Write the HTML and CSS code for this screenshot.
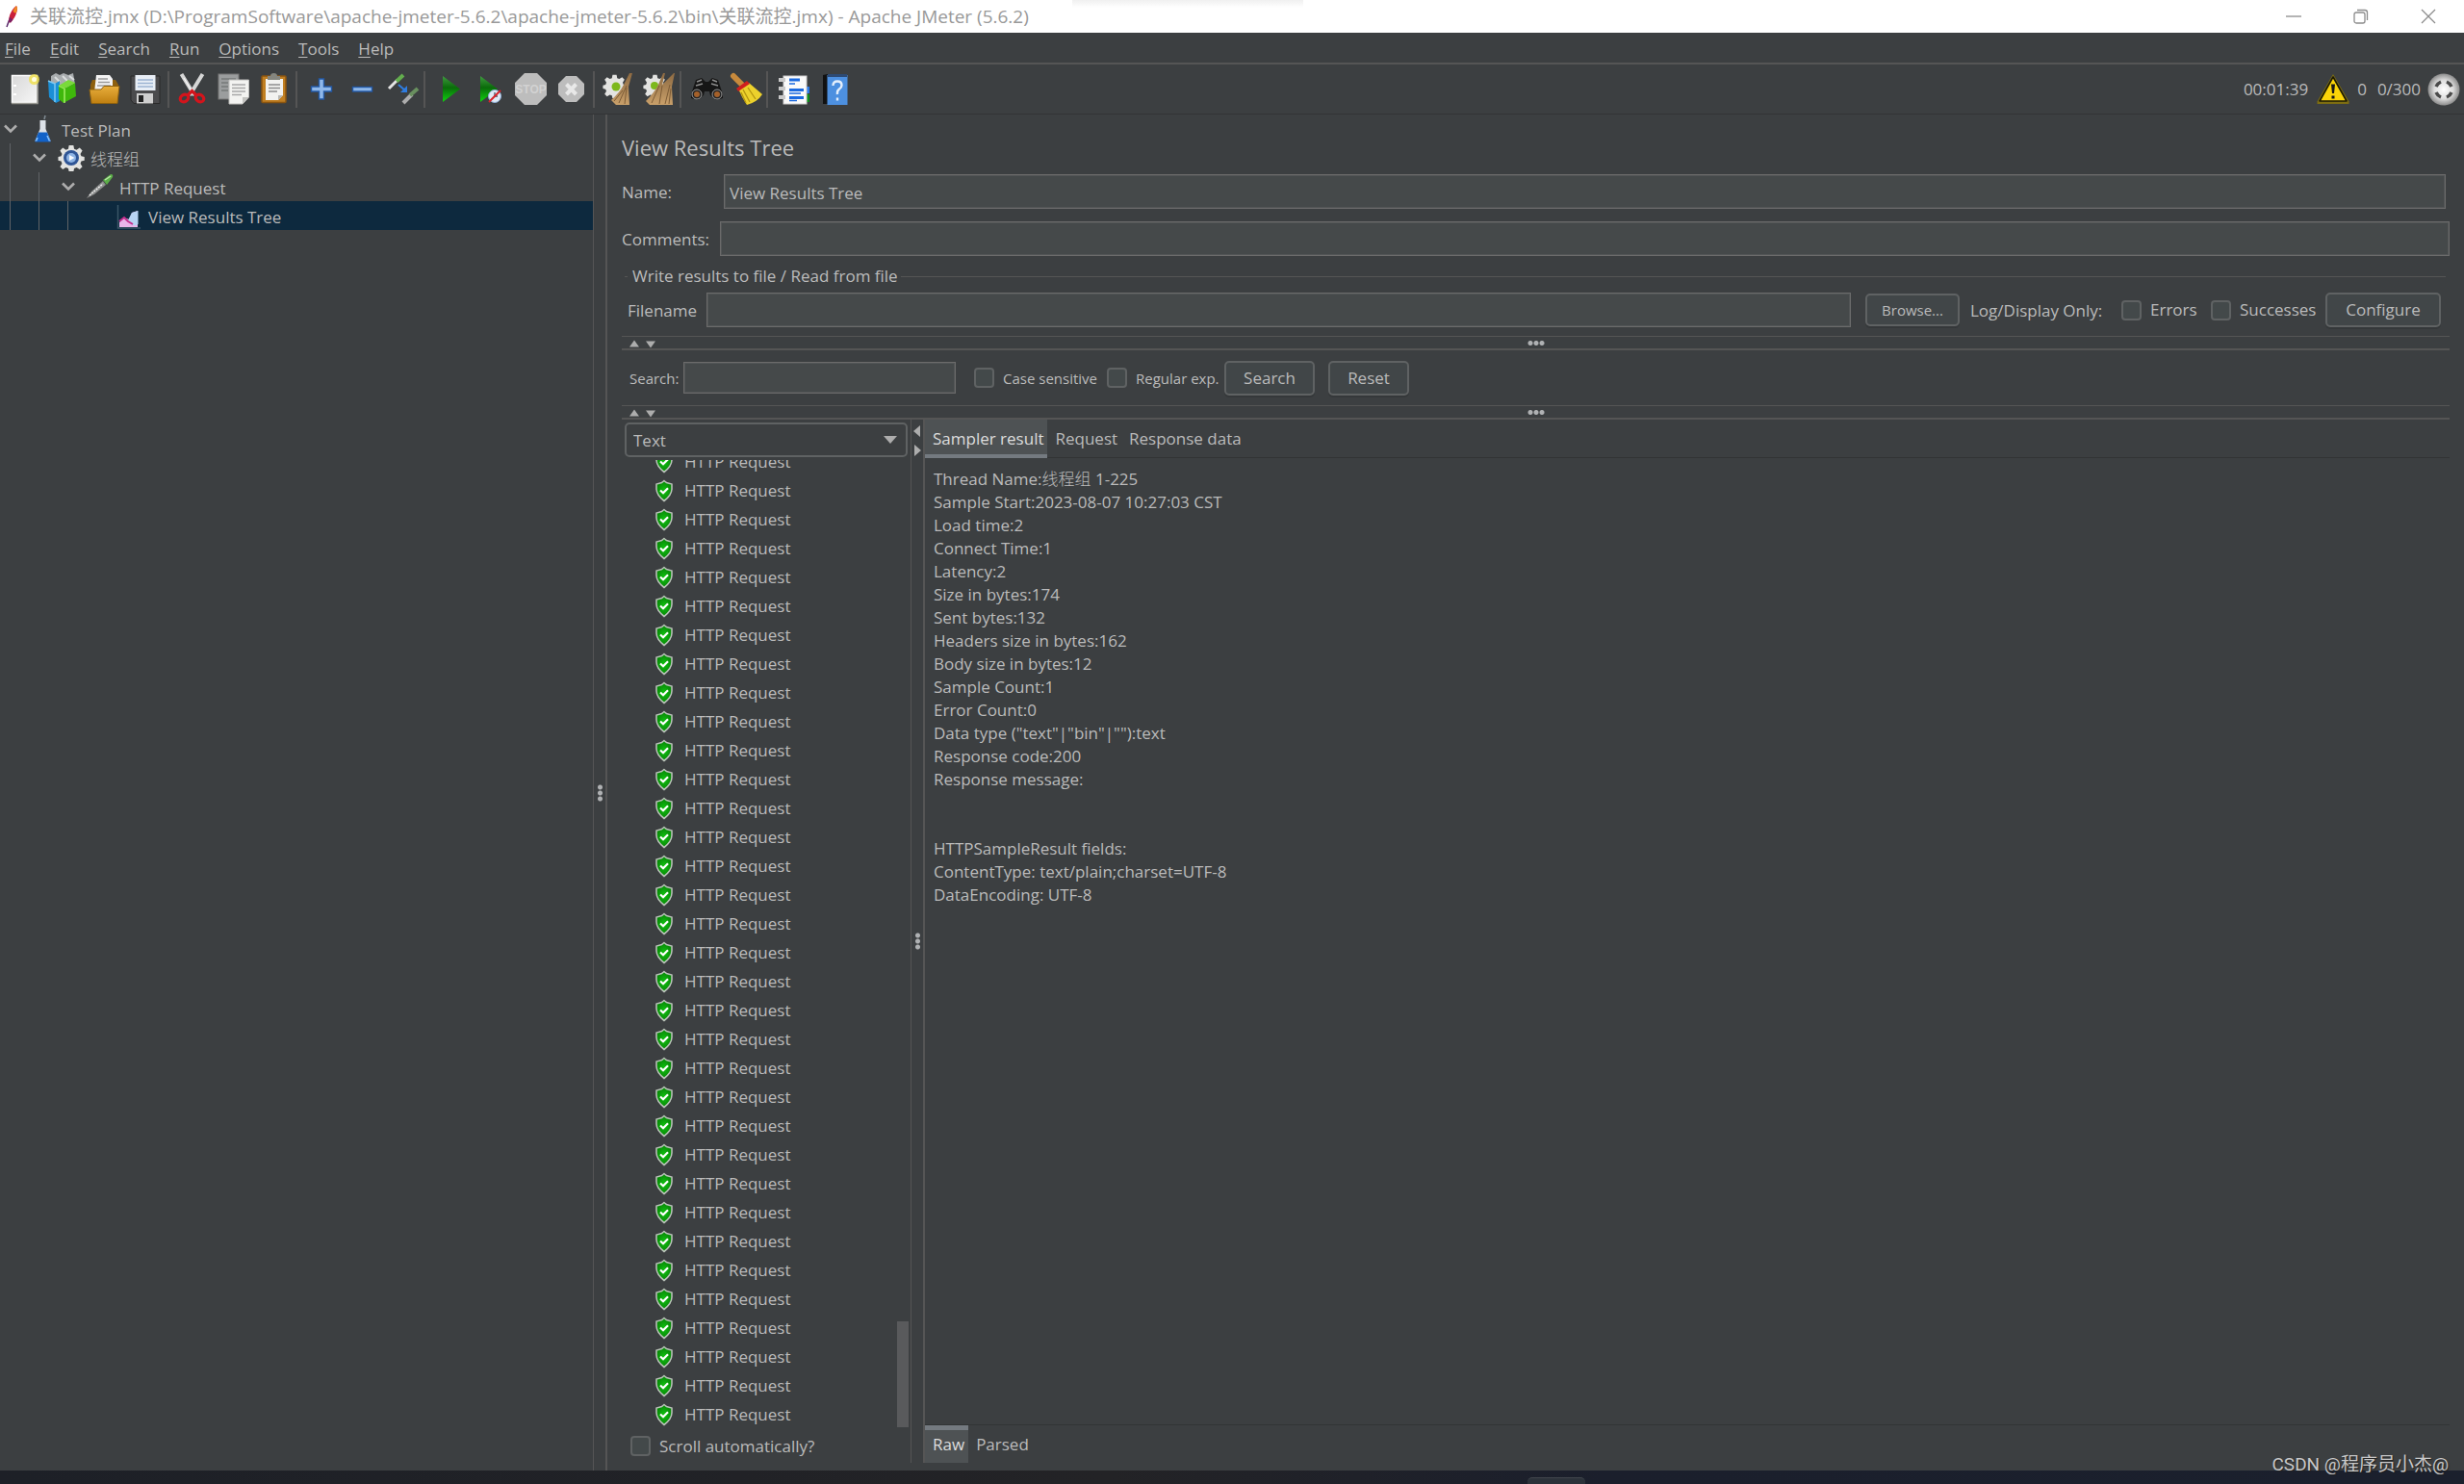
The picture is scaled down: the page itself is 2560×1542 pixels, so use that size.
FILE: index.html
```html
<!DOCTYPE html>
<html lang="en">
<head>
<meta charset="utf-8">
<title>Apache JMeter (5.6.2)</title>
<link rel="stylesheet" href="styles.css">
</head>
<body>
<svg class="defs" aria-hidden="true">
  <defs>
    <linearGradient id="gGreen" x1="0" y1="0" x2="0" y2="1"><stop offset="0" stop-color="#3f9a3f"/><stop offset=".45" stop-color="#0a6b0a"/><stop offset="1" stop-color="#0fd40f"/></linearGradient>
    <linearGradient id="gFolder" x1="0" y1="0" x2="0" y2="1"><stop offset="0" stop-color="#e8ae3c"/><stop offset="1" stop-color="#bf7f10"/></linearGradient>
    <linearGradient id="gPaper" x1="0" y1="0" x2="1" y2="1"><stop offset="0" stop-color="#d8d8d8"/><stop offset="1" stop-color="#f6f6f6"/></linearGradient>
    <linearGradient id="gBroom" x1="0" y1="0" x2="0" y2="1"><stop offset="0" stop-color="#8d6a42"/><stop offset="1" stop-color="#c9a06a"/></linearGradient>
    <radialGradient id="gBall"><stop offset="0" stop-color="#fff"/><stop offset=".6" stop-color="#dcdcdc"/><stop offset="1" stop-color="#8c8c8c"/></radialGradient>
    <radialGradient id="gShield"><stop offset="0" stop-color="#10c410"/><stop offset="1" stop-color="#078407"/></radialGradient>
  </defs>
  <symbol id="shield" viewBox="0 0 20 24">
    <path d="M10 .5 13 2.500 19 4.500V10C19 16 15 20 10 23.500 5 20 1 16 1 10V4.500L7 2.500Z" fill="#2b2d2e"/>
    <path d="M10 1.500 12.500 3.500 18 5V10C18 15.500 14.500 19 10 22.500 5.500 19 2 15.500 2 10V5L7.500 3.500Z" fill="url(#gShield)" stroke="#b9c2b9" stroke-width="1.600"/>
    <path d="M6 11.500 9 14.200 14 9.200" fill="none" stroke="#fff" stroke-width="2.200"/>
  </symbol>
  <symbol id="chevron" viewBox="0 0 16 10"><path d="M2 1.500 8 7.500 14 1.500" fill="none" stroke="#adadad" stroke-width="2.600"/></symbol>
  <symbol id="cog" viewBox="0 0 30 30">
    <path d="M12.500 1h5l.8 4 2.600 1.100 3.500-2.300 3 3.200-2.200 3.600 1 2.600 3.500.8v4l-3.500.8-1 2.600 2.200 3.500-3 3-3.500-2.200-2.600 1.100-.8 3.700h-5l-.8-3.700-2.600-1.100-3.500 2.200-3-3 2.200-3.500-1-2.600L.5 18v-4l3.300-.8 1-2.600L2.600 7l3-3.200 3.500 2.300L11.700 5Z" fill="#e3e3e1"/>
  </symbol>
</svg>

<header class="titlebar">
  <svg class="feather" viewBox="0 0 14 24"><path d="M1 23 3.500 16" stroke="#5b2a6b" stroke-width="1.500"/><path d="M3 18C3 11 6 5 11 1l1 2C12 9 9 14 5 18.500Z" fill="#c9203a"/><path d="M7.500 7Q9 3 11 1l1 2Q12 6 10.500 9Z" fill="#f08a24"/><path d="M3 18Q3 15 4 12.500L7.500 15.500 5 18.500Z" fill="#7d2064"/></svg>
  <span class="window-title">关联流控.jmx (D:\ProgramSoftware\apache-jmeter-5.6.2\apache-jmeter-5.6.2\bin\关联流控.jmx) - Apache JMeter (5.6.2)</span>
  <div class="window-controls">
    <button aria-label="Minimize"><svg viewBox="0 0 16 16"><path d="M0 8H16"/></svg></button>
    <button aria-label="Restore"><svg viewBox="0 0 16 16"><rect x="1" y="4" width="11" height="11" rx="2"/><path d="M4 1.500H12Q14.500 1.500 14.500 4V12"/></svg></button>
    <button aria-label="Close"><svg viewBox="0 0 16 16"><path d="M1 1 15 15M15 1 1 15"/></svg></button>
  </div>
</header>

<nav class="menubar">
  <button><u>F</u>ile</button><button><u>E</u>dit</button><button><u>S</u>earch</button><button><u>R</u>un</button><button><u>O</u>ptions</button><button><u>T</u>ools</button><button><u>H</u>elp</button>
</nav>

<div class="toolbar">
  <button aria-label="New"><svg viewBox="0 0 43 50"><rect x="10.500" y="10.500" width="26" height="28" fill="url(#gPaper)" stroke="#fff" stroke-width="1.500"/><path d="M10 39.500H37V14" fill="none" stroke="#9a9a94" stroke-width="1.500"/><path d="M13.500 20v2M13.500 29v2" stroke="#fff" stroke-width="3"/><circle cx="33.500" cy="14.500" r="5.500" fill="#f0e04a" opacity=".8"/><circle cx="33.500" cy="14.500" r="2.500" fill="#fffde0"/></svg></button>
  <button aria-label="Templates"><svg viewBox="0 0 43 50"><path d="M8 11 13 8 17 10 21 8 26 10 31 8 33 20 26 24 8 18Z" fill="#a9adaf"/><path d="M12 12 17 17M20 11 25 16M27 11 32 15" stroke="#d9dcdd" stroke-width="2"/><path d="M5 16 12 19 17 16V37L13 39 6 33Z" fill="#1b8fd6"/><path d="M5 16 12 19V38" fill="none" stroke="#7cc8f2" stroke-width="1.500"/><path d="M16 21 22 24 33 18 34 32 21 39 16 35Z" fill="#3fb80c"/><path d="M16 21 22 24V39" fill="none" stroke="#a4ee66" stroke-width="1.500"/><path d="M16 21 26 15 33 18 22 24Z" fill="#7ada3a"/></svg></button>
  <button aria-label="Open"><svg viewBox="0 0 43 50"><path d="M8 15H32L35 20V30H6V20Z" fill="#8d600f"/><path d="M12 10H26L29 14V28H10Z" fill="#f4f4f4"/><path d="M14 14H24M14 17.500H26M13 21H27" stroke="#9b9b9b" stroke-width="1.500"/><path d="M5 25H17L20 21.500H36L34 39.500H7Z" fill="url(#gFolder)" stroke="#8d600f"/></svg></button>
  <button aria-label="Save"><svg viewBox="0 0 43 50"><path d="M5 11H35V39.500H8L5 36Z" fill="#4b4b4d" stroke="#2a2a2a"/><rect x="9.500" y="10" width="21" height="16" fill="#e8eef6"/><path d="M12 15H28M12 18.500H28M12 22H28" stroke="#9cb4d2" stroke-width="1.500"/><rect x="11" y="29" width="17" height="10.500" fill="#cfcfcf"/><rect x="13" y="31" width="5" height="7" fill="#222"/></svg></button>
  <i></i>
  <button aria-label="Cut"><svg viewBox="0 0 43 50"><path d="M10.500 9 24 31M32.500 9 19 31" stroke="#d6d6d6" stroke-width="4"/><path d="M13 13 22 28" stroke="#fff" stroke-width="1"/><g fill="none" stroke="#d3141c" stroke-width="3.200"><ellipse cx="13.500" cy="34" rx="4.500" ry="3.500" transform="rotate(-30 13.500 34)"/><ellipse cx="29.500" cy="34" rx="4.500" ry="3.500" transform="rotate(30 29.500 34)"/><path d="M17 31 21.500 26.500 26 31"/></g></svg></button>
  <button aria-label="Copy"><svg viewBox="0 0 43 50"><rect x="6" y="9" width="21" height="26" fill="#9b9d9e" stroke="#777"/><path d="M9 14H24M9 18H16M9 22H16M9 26H16" stroke="#77797a" stroke-width="1.500"/><path d="M17 15H37.500V33L31 40H17Z" fill="#f3f3f1" stroke="#bdbdbb"/><path d="M20 20H34M20 23.500H34M20 27H34M20 30.500H30" stroke="#a8a8a8" stroke-width="1.400"/><path d="M31 40V33H37.500Z" fill="#c3c3c0"/></svg></button>
  <button aria-label="Paste"><svg viewBox="0 0 43 50"><rect x="8" y="11" width="25" height="27.500" rx="1" fill="#c07f22" stroke="#8a5510" stroke-width="1.500"/><path d="M12 14H30V31L25 36H12Z" fill="#f2f2f0"/><path d="M15 20H27M15 23.500H27M15 27H24" stroke="#8d8d8d" stroke-width="1.400"/><path d="M25 36V31H30Z" fill="#b8b8b5"/><path d="M14 11H17Q17 8 20.500 8T24 11H27V15H14Z" fill="#85867f"/></svg></button>
  <i></i>
  <button aria-label="Expand all"><svg viewBox="0 0 43 50"><path d="M20.500 14h5v8h8v5h-8v8h-5v-8h-8v-5h8Z" fill="#8fb8ea" stroke="#2359a6" stroke-width="1.400"/></svg></button>
  <button aria-label="Collapse all"><svg viewBox="0 0 43 50"><rect x="12.500" y="22.500" width="20" height="4.500" fill="#8fb8ea" stroke="#2359a6" stroke-width="1.400"/></svg></button>
  <button aria-label="Toggle"><svg viewBox="0 0 43 50"><path d="M7 24 16 15" stroke="#e4e4e4" stroke-width="3"/><path d="M15 16.500 22 10" stroke="#63ad4e" stroke-width="4"/><path d="M17 20 24 26" stroke="#2f7de1" stroke-width="2"/><path d="M26 21V28H19Z" fill="#2f7de1"/><path d="M22 39 31 30" stroke="#adadad" stroke-width="4"/><path d="M29 31 37 24" stroke="#69905f" stroke-width="4"/></svg></button>
  <i></i>
  <button aria-label="Start"><svg viewBox="0 0 43 50"><path d="M16 11 34 24.500 16 38Z" fill="url(#gGreen)"/></svg></button>
  <button aria-label="Start no pauses"><svg viewBox="0 0 43 50"><path d="M12 11 30 24.500 12 38Z" fill="url(#gGreen)"/><circle cx="27" cy="32" r="6.500" fill="#dfe9f5" stroke="#8fb0d8"/><path d="M27 28V32H30" fill="none" stroke="#456" stroke-width="1.300"/><path d="M21 38 33 26" stroke="#d8232a" stroke-width="2"/></svg></button>
  <button aria-label="Stop"><svg viewBox="0 0 43 50"><path d="M15 8H28L38 18V31L28 41H15L5 31V18Z" fill="#bdbdbd"/><text x="21.500" y="29" text-anchor="middle" class="stop-text">STOP</text></svg></button>
  <button aria-label="Shutdown"><svg viewBox="0 0 43 50"><path d="M15 11H26L34 19V30L26 38H15L7 30V19Z" fill="#bdbdbd"/><path d="M15.500 19.500 25.500 30M25.500 19.500 15.500 30" stroke="#e8e8e8" stroke-width="4"/></svg></button>
  <i></i>
  <button aria-label="Clear"><svg viewBox="0 0 43 50"><use href="#cog" x="6" y="9" width="25" height="25"/><circle cx="20" cy="22" r="4.500" fill="#7db81c"/><path d="M34 8H37L33 22 34 41H20L15 36Q24 28 28 20Z" fill="url(#gBroom)"/><path d="M31 21 23 39M31 23 29 40M27 26 18 37" stroke="#7d5c36" fill="none"/></svg></button>
  <button aria-label="Clear all"><svg viewBox="0 0 43 50"><use href="#cog" x="5" y="9" width="25" height="25"/><circle cx="17" cy="21" r="4" fill="#7db81c"/><path d="M26 8H28L25 20 37 8H38L35 22 36 41H12L8 37Q17 28 21 20Z" fill="url(#gBroom)"/><path d="M22 21 14 39M25 21 22 40M33 20 28 40M34 24 32 40" stroke="#7d5c36" fill="none"/></svg></button>
  <i></i>
  <button aria-label="Search"><svg viewBox="0 0 43 50"><path d="M13 15 19 13 23 17H26L30 13 36 15 41 30V34L34 36 28 31 27 27H22L21 31 15 36 8 34V30Z" fill="#161616"/><path d="M14 17 19 15M30 15 35 17M13 21 20 19M29 19 36 21" stroke="#8d8d8d" stroke-width="1.600"/><circle cx="14" cy="30" r="5" fill="#222" stroke="#999"/><circle cx="35" cy="30" r="5" fill="#222" stroke="#999"/><circle cx="14" cy="30" r="3" fill="#a4602a"/><circle cx="35" cy="30" r="3" fill="#a4602a"/></svg></button>
  <button aria-label="Reset search"><svg viewBox="0 0 43 50"><path d="M9 11 18 20" stroke="#c88a3c" stroke-width="6" stroke-linecap="round"/><path d="M14 24 25 18 39 30Q34 38 23 41Q18 34 14 24Z" fill="#ecd12c"/><path d="M19 25 26 38M24 23 32 35M17 28 22 39" stroke="#b3940f" stroke-width="1.300"/><path d="M12 24 23 16 26 19 14 27Z" fill="#cf1f1f"/></svg></button>
  <i></i>
  <button aria-label="Function helper"><svg viewBox="0 0 43 50"><path d="M36 22H41V29H36Z" fill="#2b7bea"/><path d="M36 30H41V38H36Z" fill="#0c8c1a"/><rect x="14" y="11" width="24" height="29" fill="#fafafa" stroke="#d0d0d0"/><path d="M20 15H31M20 25.500H35M20 33.500H35" stroke="#1b6ae0" stroke-width="3"/><path d="M20 19H26M20 29H32M20 36.500H28" stroke="#1b6ae0" stroke-width="1.400"/><path d="M9 15H16M9 24H16M9 33H16" stroke="#c9c9c9" stroke-width="4"/></svg></button>
  <button aria-label="Help"><svg viewBox="0 0 43 50"><path d="M12 10 17 9V40H12Z" fill="#111"/><rect x="16.500" y="10" width="21" height="31" fill="#4d90e0"/><path d="M17 9H37V12H17Z" fill="#2d4a74"/><path d="M22.500 21Q22.500 16.500 27 16.500T31.500 20.500Q31.500 23 29 24.500T27 30M27 33.500V36.500" fill="none" stroke="#e4effc" stroke-width="2.400"/></svg></button>
  <div class="status">
    <span class="elapsed">00:01:39</span>
    <svg class="warn" viewBox="0 0 34 32"><path d="M17 0 33.500 28.500V31H.5V28.500Z" fill="#7d6d11"/><path d="M17 3 31 28H3Z" fill="#fbd408" stroke="#1c1a05" stroke-width="1.600" stroke-linejoin="round"/><path d="M15 10.500H19L18 20H16ZM15.500 22.500H18.500V25.500H15.500Z" fill="#181818"/></svg>
    <span>0</span>
    <span class="threads">0/300</span>
    <svg class="ball" viewBox="0 0 34 34"><circle cx="17" cy="17" r="16.500" fill="url(#gBall)"/><path d="M9 14Q10.500 10.500 14 9M20 9Q23.500 10.500 25 14M25 20Q23.500 23.500 20 25M14 25Q10.500 23.500 9 20" fill="none" stroke="#4a4a4a" stroke-width="3.500"/></svg>
  </div>
</div>

<main class="workspace">
  <aside class="plan">
    <div class="node"><svg class="chev"><use href="#chevron"/></svg><svg class="ico" viewBox="0 0 30 30"><path d="M11.500 6H17.500V15L22.500 27V28H6.500V27L11.500 15Z" fill="#dde2e8"/><path d="M16 5 17 1" stroke="#7f8a92" stroke-width="1.500"/><path d="M10 18.500H19L22.500 27V28.500H6.500V27Z" fill="#1262c8"/><path d="M9 24 7.500 27.500M19 22 21.500 27.500" stroke="#8ec6ff" stroke-width="1.500"/></svg><span>Test Plan</span></div>
    <div class="node"><b></b><svg class="chev"><use href="#chevron"/></svg><svg class="ico" viewBox="0 0 30 30"><use href="#cog" x="0" y="1" width="28" height="28"/><circle cx="14" cy="15" r="8" fill="#2f5596"/><circle cx="14" cy="15" r="5" fill="#8db3e4"/><path d="M12 12 17.500 15 12 18Z" fill="#f4f8ff"/></svg><span class="thin">线程组</span></div>
    <div class="node"><b></b><b></b><svg class="chev"><use href="#chevron"/></svg><svg class="ico" viewBox="0 0 30 30"><path d="M0 27 5 20 17 9 20 13 8 23Z" fill="#8b8d8c"/><path d="M3 24 17 12" stroke="#eee" stroke-width="1.500" stroke-dasharray="2 1"/><path d="M17 8 25 2Q28 2 27 5L21 13Z" fill="#5cae49"/><path d="M19 8 25 4" stroke="#b7e3a6" stroke-width="1.500"/></svg><span>HTTP Request</span></div>
    <div class="node selected"><b></b><b></b><b></b><svg class="chev"></svg><svg class="ico" viewBox="0 0 30 30"><path d="M2.500 4V28H26" fill="none" stroke="#3a5666" stroke-width="1.500"/><path d="M4 27V22L9 17 14 19 17 12 23 10V27Z" fill="#e9b5ea"/><path d="M13 20 17 12 23.500 10V24Q18 28 13 20Z" fill="#b8d4f4"/><path d="M4 21 9 17 13 21 18 24" fill="none" stroke="#c22f8e" stroke-width="2"/></svg><span>View Results Tree</span></div>
  </aside>
  <div class="splitter-v"><span class="grip"></span></div>

  <section class="panel">
    <h1>View Results Tree</h1>
    <div class="field name"><label for="name">Name:</label><input id="name" type="text" value="View Results Tree"></div>
    <div class="field comments"><label for="comments">Comments:</label><input id="comments" type="text"></div>
    <fieldset>
      <legend>Write results to file / Read from file</legend>
      <div class="file-row">
        <label for="filename">Filename</label><input id="filename" type="text">
        <button class="btn browse">Browse...</button>
        <span class="only">Log/Display Only:</span>
        <label class="check errors"><input type="checkbox">Errors</label>
        <label class="check successes"><input type="checkbox">Successes</label>
        <button class="btn configure">Configure</button>
      </div>
    </fieldset>
    <div class="splitter-h"><svg class="arrows" viewBox="0 0 32 10"><path d="M5 8.500H15L10 1.500ZM22 2.500H32L27 9.500Z"/></svg><span class="grip"></span></div>
    <div class="search-row">
      <label for="search">Search:</label><input id="search" type="text">
      <label class="check case"><input type="checkbox">Case sensitive</label>
      <label class="check regex"><input type="checkbox">Regular exp.</label>
      <button class="btn find">Search</button>
      <button class="btn reset">Reset</button>
    </div>
    <div class="splitter-h"><svg class="arrows" viewBox="0 0 32 10"><path d="M5 8.500H15L10 1.500ZM22 2.500H32L27 9.500Z"/></svg><span class="grip"></span></div>

    <div class="results">
      <div class="samples">
        <div class="renderer"><select aria-label="Renderer"><option>Text</option></select><svg viewBox="0 0 14 10"><path d="M0 1H14L7 9Z"/></svg></div>
        <div class="list">
          <ul>
            <li><svg><use href="#shield"/></svg>HTTP Request</li>
            <li><svg><use href="#shield"/></svg>HTTP Request</li>
            <li><svg><use href="#shield"/></svg>HTTP Request</li>
            <li><svg><use href="#shield"/></svg>HTTP Request</li>
            <li><svg><use href="#shield"/></svg>HTTP Request</li>
            <li><svg><use href="#shield"/></svg>HTTP Request</li>
            <li><svg><use href="#shield"/></svg>HTTP Request</li>
            <li><svg><use href="#shield"/></svg>HTTP Request</li>
            <li><svg><use href="#shield"/></svg>HTTP Request</li>
            <li><svg><use href="#shield"/></svg>HTTP Request</li>
            <li><svg><use href="#shield"/></svg>HTTP Request</li>
            <li><svg><use href="#shield"/></svg>HTTP Request</li>
            <li><svg><use href="#shield"/></svg>HTTP Request</li>
            <li><svg><use href="#shield"/></svg>HTTP Request</li>
            <li><svg><use href="#shield"/></svg>HTTP Request</li>
            <li><svg><use href="#shield"/></svg>HTTP Request</li>
            <li><svg><use href="#shield"/></svg>HTTP Request</li>
            <li><svg><use href="#shield"/></svg>HTTP Request</li>
            <li><svg><use href="#shield"/></svg>HTTP Request</li>
            <li><svg><use href="#shield"/></svg>HTTP Request</li>
            <li><svg><use href="#shield"/></svg>HTTP Request</li>
            <li><svg><use href="#shield"/></svg>HTTP Request</li>
            <li><svg><use href="#shield"/></svg>HTTP Request</li>
            <li><svg><use href="#shield"/></svg>HTTP Request</li>
            <li><svg><use href="#shield"/></svg>HTTP Request</li>
            <li><svg><use href="#shield"/></svg>HTTP Request</li>
            <li><svg><use href="#shield"/></svg>HTTP Request</li>
            <li><svg><use href="#shield"/></svg>HTTP Request</li>
            <li><svg><use href="#shield"/></svg>HTTP Request</li>
            <li><svg><use href="#shield"/></svg>HTTP Request</li>
            <li><svg><use href="#shield"/></svg>HTTP Request</li>
            <li><svg><use href="#shield"/></svg>HTTP Request</li>
            <li><svg><use href="#shield"/></svg>HTTP Request</li>
            <li><svg><use href="#shield"/></svg>HTTP Request</li>
          </ul>
          <span class="thumb"></span>
        </div>
        <label class="check auto"><input type="checkbox">Scroll automatically?</label>
      </div>
      <div class="splitter-v inner"><svg class="side-arrows" viewBox="0 0 10 36"><path d="M8 1V13L1 7ZM2 21V33L9 27Z"/></svg><span class="grip"></span></div>
      <div class="detail">
        <div class="tabs" role="tablist"><button role="tab" aria-selected="true">Sampler result</button><button role="tab">Request</button><button role="tab">Response data</button></div>
        <pre class="output">Thread Name:<span class="thin">线程组</span> 1-225
Sample Start:2023-08-07 10:27:03 CST
Load time:2
Connect Time:1
Latency:2
Size in bytes:174
Sent bytes:132
Headers size in bytes:162
Body size in bytes:12
Sample Count:1
Error Count:0
Data type ("text"|"bin"|""):text
Response code:200
Response message:


HTTPSampleResult fields:
ContentType: text/plain;charset=UTF-8
DataEncoding: UTF-8</pre>
        <div class="tabs bottom" role="tablist"><button role="tab" aria-selected="true">Raw</button><button role="tab">Parsed</button></div>
      </div>
    </div>
  </section>
</main>
<footer class="desktop"><span class="nub"></span></footer>
<div class="watermark">CSDN @程序员小杰@</div>
</body>
</html>
```
FILE: styles.css
```css
* { box-sizing: border-box; }
html { height: 100%; }
body {
  margin: 0;
  height: 100%;
  display: flex;
  flex-direction: column;
  overflow: hidden;
  background: #3c3f41;
  color: #bbb;
  font: 17px/24px "Open Sans", "Noto Sans CJK SC", sans-serif;
}
button, input, select { font: inherit; color: inherit; margin: 0; }
button { background: none; border: 0; padding: 0; }
svg { display: block; flex: none; }
.defs { position: absolute; width: 0; height: 0; }
.thin { font-weight: 300; }

/* Title bar */
.titlebar {
  flex: none;
  height: 34px;
  display: flex;
  align-items: center;
  padding: 0 2px 0 6px;
  background: #fff linear-gradient(#f0f0f0, #fff) no-repeat 48% 0 / 240px 8px;
  color: #999;
}
.feather { width: 14px; height: 24px; fill: none; }
.window-title { margin-left: 11px; font-size: 19px; }
.window-controls { display: flex; margin-left: auto; }
.window-controls button { width: 70px; height: 34px; display: grid; place-items: center; }
.window-controls svg { width: 16px; height: 16px; fill: none; stroke: #8c8c8c; stroke-width: 1.3px; }

/* Menu */
.menubar {
  flex: none;
  height: 33px;
  display: flex;
  gap: 20px;
  padding: 2px 0 0 5px;
  border-bottom: 2px solid #555;
}
.menubar u { text-decoration: underline 1px #bbb; text-underline-offset: 2px; text-decoration-skip-ink: none; }

/* Toolbar */
.toolbar {
  flex: none;
  height: 52px;
  display: flex;
  align-items: center;
  padding: 0 4px 0 2px;
  border-bottom: 1px solid #323435;
}
.toolbar button, .toolbar button svg { width: 43px; height: 50px; }
.toolbar i { width: 4px; height: 38px; border-left: 2px solid #555; }
.stop-text { font: 700 12px "Liberation Sans", sans-serif; fill: #d2d2d2; }
.status { display: flex; align-items: center; margin-left: auto; }
.warn { width: 34px; height: 32px; margin: 0 8px 0 9px; }
.threads { margin-left: 11px; }
.ball { width: 34px; height: 34px; margin-left: 7px; }

/* Test plan tree */
.workspace { flex: 1; min-height: 0; display: flex; }
.plan { flex: none; width: 616px; }
.node { display: flex; align-items: center; height: 30px; }
.node b { width: 30px; height: 30px; padding-left: 10px; }
.node b::before { content: ""; display: block; width: 1px; height: 30px; background: #606366; }
.chev { width: 16px; height: 10px; margin: 0 11px 0 3px; }
.ico { width: 30px; height: 30px; margin-right: 4px; }
.node span { padding-top: 3px; }
.selected { background: #0d293e; }

/* Splitters */
.splitter-v {
  flex: none;
  width: 15px;
  display: grid;
  place-items: center;
  border: solid #555;
  border-width: 0 2px 0 1px;
}
.splitter-h {
  position: relative;
  flex: none;
  height: 15px;
  display: grid;
  place-items: center;
  border: solid #555;
  border-width: 1px 0 2px;
}
.grip {
  width: 18px;
  height: 5px;
  background: radial-gradient(circle, #afb1b3 2px, transparent 3px) 0 0 / 6px 5px;
}
.splitter-v .grip { width: 5px; height: 18px; background-size: 5px 6px; }
.arrows { position: absolute; left: 3px; top: 2px; width: 32px; height: 10px; fill: #adadad; }
.side-arrows { position: absolute; left: 1px; top: 5px; width: 10px; height: 36px; fill: #adadad; }
.inner { position: relative; }

/* Component panel */
.panel {
  flex: 1;
  min-width: 0;
  display: flex;
  flex-direction: column;
  padding: 18px 15px 8px;
}
h1 { margin: 0 0 12px; font-size: 22px; line-height: 32px; font-weight: 400; }
input[type="text"] {
  min-width: 0;
  height: 36px;
  padding: 2px 5px 0;
  background: #45494a;
  border: 1px solid #6b6b6b;
  box-shadow: inset 0 0 0 1px #525556;
}
.field { display: flex; align-items: center; }
.field label { width: 106px; padding-top: 2px; }
.field input { flex: 1; }
.name { margin: 0 4px 13px 0; }
.comments label { width: 102px; }
fieldset {
  min-width: 0;
  margin: 9px 4px 9px 3px;
  padding: 5px 5px 0 3px;
  border: 0;
  border-top: 1px solid #555;
}
legend { padding: 0 3px 0 5px; }
.file-row, .search-row { display: flex; align-items: center; }
.file-row > label:first-child, .only { padding-top: 2px; }
#filename { flex: 1; margin: 0 15px 0 10px; }
.btn {
  height: 36px;
  background: #414648;
  border: 2px solid #5f6263;
  border-radius: 5px;
  box-shadow: 0 2px 0 #35383a;
}
.browse { width: 98px; height: 34px; font-size: 15px; }
.only { width: 145px; margin-left: 11px; }
.configure { width: 120px; }
.check { display: flex; align-items: center; gap: 9px; }
.check input {
  appearance: none;
  flex: none;
  width: 21px;
  height: 21px;
  background: #43494a;
  border: 2px solid #5f6263;
  border-radius: 4px;
}
.errors { width: 93px; margin-left: 12px; }
.successes { width: 119px; }

.search-row { flex: none; height: 57px; padding-left: 8px; font-size: 15px; }
.search-row > label:first-child { width: 56px; }
#search { width: 283px; height: 33px; margin-right: 19px; }
.case { width: 138px; }
.regex { width: 122px; }
.search-row .btn { font-size: 17px; }
.find { width: 94px; margin-right: 14px; }
.reset { width: 84px; }

/* Sample list */
.results { flex: 1; min-height: 0; display: flex; }
.samples { flex: none; width: 300px; display: flex; flex-direction: column; }
.renderer { position: relative; margin: 3px; }
.renderer select {
  appearance: none;
  display: block;
  width: 100%;
  height: 36px;
  padding: 2px 7px 0;
  background: #3c3f41;
  border: 2px solid #5f6263;
  border-radius: 5px;
}
.renderer svg { position: absolute; right: 11px; top: 13px; width: 14px; height: 10px; fill: #adadad; }
.list { position: relative; flex: 1; min-height: 0; overflow: hidden; display: flex; align-items: flex-end; }
ul { margin: 0; padding: 0 0 0 34px; list-style: none; }
li { display: flex; align-items: center; gap: 11px; height: 30px; }
li svg { width: 20px; height: 24px; }
.thumb { position: absolute; right: 2px; bottom: 2px; width: 12px; height: 110px; background: #595a5c; }
.auto { height: 35px; padding-left: 9px; }

/* Sample details */
.detail { flex: 1; min-width: 0; display: flex; flex-direction: column; }
.tabs { flex: none; display: flex; height: 40px; border-bottom: 1px solid #323435; }
.tabs button { height: 40px; padding: 0 4px 0 8px; }
.tabs button[aria-selected="true"] { background: #4e5254; color: #ddd; box-shadow: inset 0 -4px #747a80; }
.output { flex: 1; margin: 0; padding: 10px 9px; font: inherit; }
.bottom { border-bottom: 0; border-top: 1px solid #323435; }
.bottom button { height: 39px; }
.bottom button[aria-selected="true"] { box-shadow: inset 0 5px #747a80; }

/* Desktop strip below the window */
.desktop {
  flex: none;
  height: 14px;
  display: flex;
  align-items: flex-end;
  background: linear-gradient(90deg, #1d2027, #232326 45%, #1b1f2c 65%, #1b202d);
}
.nub { width: 60px; height: 7px; margin-left: 62%; background: #2c323a; border-top: 1px solid #41464c; border-radius: 5px 5px 0 0; }
.watermark {
  position: absolute;
  right: 16px;
  bottom: 6px;
  font: 19px/28px Roboto, "Noto Sans CJK SC", sans-serif;
  color: #c8c8c8;
  text-shadow: 1px 1px 1px #222;
}
```
